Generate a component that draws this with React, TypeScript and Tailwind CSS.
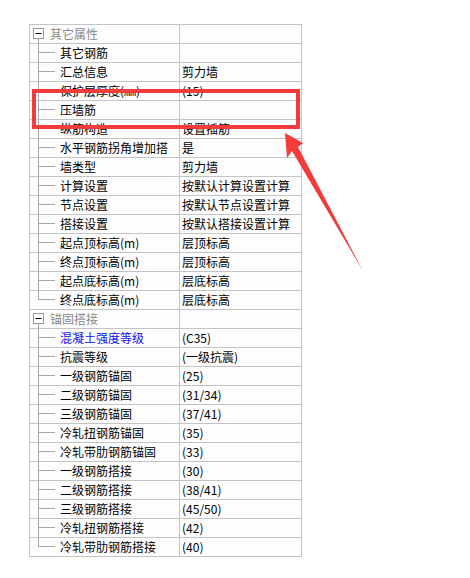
import React from 'react'

type Item = { name: string; value: string; blue?: boolean }
type Group = { title: string; items: Item[] }

const GROUPS: Group[] = [
  {
    title: '其它属性',
    items: [
      { name: '其它钢筋', value: '' },
      { name: '汇总信息', value: '剪力墙' },
      { name: '保护层厚度(㎜)', value: '(15)' },
      { name: '压墙筋', value: '' },
      { name: '纵筋构造', value: '设置插筋' },
      { name: '水平钢筋拐角增加搭', value: '是' },
      { name: '墙类型', value: '剪力墙' },
      { name: '计算设置', value: '按默认计算设置计算' },
      { name: '节点设置', value: '按默认节点设置计算' },
      { name: '搭接设置', value: '按默认搭接设置计算' },
      { name: '起点顶标高(m)', value: '层顶标高' },
      { name: '终点顶标高(m)', value: '层顶标高' },
      { name: '起点底标高(m)', value: '层底标高' },
      { name: '终点底标高(m)', value: '层底标高' },
    ],
  },
  {
    title: '锚固搭接',
    items: [
      { name: '混凝土强度等级', value: '(C35)', blue: true },
      { name: '抗震等级', value: '(一级抗震)' },
      { name: '一级钢筋锚固', value: '(25)' },
      { name: '二级钢筋锚固', value: '(31/34)' },
      { name: '三级钢筋锚固', value: '(37/41)' },
      { name: '冷轧扭钢筋锚固', value: '(35)' },
      { name: '冷轧带肋钢筋锚固', value: '(33)' },
      { name: '一级钢筋搭接', value: '(30)' },
      { name: '二级钢筋搭接', value: '(38/41)' },
      { name: '三级钢筋搭接', value: '(45/50)' },
      { name: '冷轧扭钢筋搭接', value: '(42)' },
      { name: '冷轧带肋钢筋搭接', value: '(40)' },
    ],
  },
]

function GroupRow({ title }: { title: string }) {
  return (
    <div className="flex h-[19px] border-b border-[#c4c4c4]">
      <div className="relative flex w-[150px] items-center border-r border-[#c4c4c4]">
        <svg className="absolute left-0 top-0" width="20" height="18">
          <line x1="8.5" y1="14" x2="8.5" y2="18" stroke="#a8a8a8" />
          <rect x="3.5" y="3.5" width="10" height="10" fill="#fff" stroke="#9a9a9a" />
          <line x1="5.5" y1="8.5" x2="11.5" y2="8.5" stroke="#000" />
        </svg>
        <span className="pl-[20px] text-[#8a8a8a]">{title}</span>
      </div>
      <div className="flex-1" />
    </div>
  )
}

function ItemRow({ item, last }: { item: Item; last: boolean }) {
  return (
    <div className="flex h-[19px] border-b border-[#c4c4c4]">
      <div className="flex w-[150px] items-center border-r border-[#c4c4c4]">
        <svg className="shrink-0" width="28" height="18">
          <line x1="8.5" y1="-1" x2="8.5" y2={last ? 9 : 18} stroke="#a8a8a8" />
          <line x1="8.5" y1="8.5" x2="25" y2="8.5" stroke="#a8a8a8" />
        </svg>
        <span className={`whitespace-nowrap pl-[2px] ${item.blue ? 'text-[#1010f0]' : 'text-black'}`}>{item.name}</span>
      </div>
      <div className="flex flex-1 items-center whitespace-nowrap pl-[2px] text-black">{item.value}</div>
    </div>
  )
}

export default function App() {
  return (
    <div
      className="relative h-[578px] w-[470px] overflow-hidden bg-white pl-[29px] pt-[24px] text-[12px] leading-none"
      style={{ fontFamily: '"Noto Sans CJK SC", "Noto Sans", sans-serif' }}
    >
      <div className="w-[273px] border-l border-r border-t border-[#c4c4c4] bg-[#fdfdfd]">
        {GROUPS.map((g) => (
          <div key={g.title}>
            <GroupRow title={g.title} />
            {g.items.map((it, i) => (
              <ItemRow key={it.name} item={it} last={i === g.items.length - 1} />
            ))}
          </div>
        ))}
      </div>

      {/* annotation box */}
      <div className="absolute left-[32px] top-[89px] h-[40px] w-[268px] border-[4px] border-[#f23c3c]" />

      {/* annotation arrow */}
      <svg className="absolute left-0 top-0" width="470" height="578">
        <polygon
          points="285,133 303,143 298,147 363,271 292,151 287,158"
          fill="#f23c3c"
        />
      </svg>
    </div>
  )
}
